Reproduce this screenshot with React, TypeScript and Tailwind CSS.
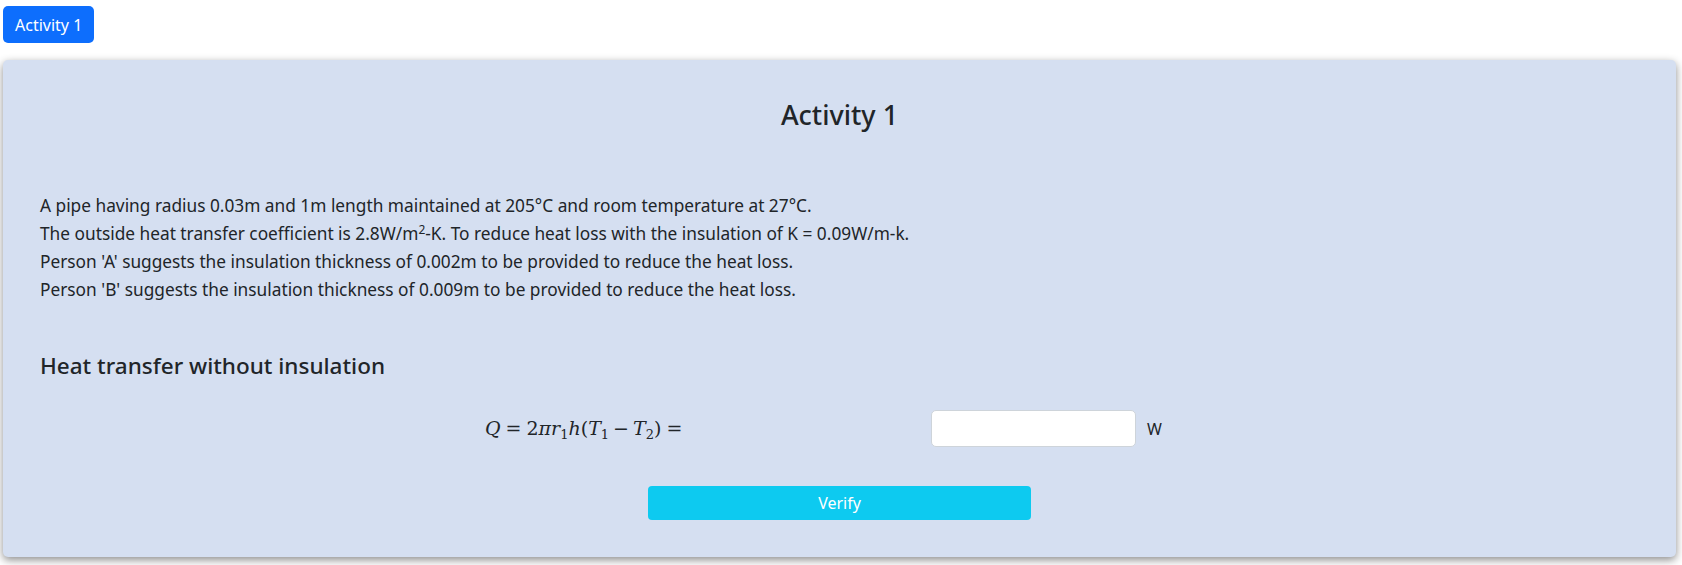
import React, { useState } from 'react';

const App: React.FC = () => {
  const [answer, setAnswer] = useState('');

  return (
    <div className="min-h-screen bg-white text-[#212529]" style={{ fontFamily: '"Noto Sans", "Open Sans", sans-serif' }}>
      <div className="pt-[6px] pl-[3px]">
        <button className="h-[37px] px-[12px] rounded-[5px] bg-[#0d6efd] text-white text-[16px] leading-none">
          Activity 1
        </button>
      </div>

      <div className="mt-[17px] ml-[3px] w-[1673px] h-[497px] rounded-[5px] bg-[#d5dff1] shadow-[0_3px_8px_rgba(0,0,0,0.45)] px-[37px] pt-[39px]">
        <h3 className="text-center text-[27px] font-medium leading-[1.2]">Activity 1</h3>

        <div className="mt-[61px] text-[17.3px] leading-[27.9px]">
          <p>A pipe having radius 0.03m and 1m length maintained at 205°C and room temperature at 27°C.</p>
          <p>
            The outside heat transfer coefficient is 2.8W/m<sup className="text-[12px]">2</sup>-K. To reduce heat loss with the
            insulation of K = 0.09W/m-k.
          </p>
          <p>Person 'A' suggests the insulation thickness of 0.002m to be provided to reduce the heat loss.</p>
          <p>Person 'B' suggests the insulation thickness of 0.009m to be provided to reduce the heat loss.</p>
        </div>

        <h4 className="mt-[48px] text-[22.5px] font-medium leading-[1.2]">Heat transfer without insulation</h4>

        <div className="mt-[31px] flex items-center">
          <div className="w-[891px] pl-[445px] text-[19px] italic whitespace-nowrap" style={{ fontFamily: '"DejaVu Serif", "Liberation Serif", serif' }}>
            <span>Q</span>
            <span className="not-italic mx-[5px]">=</span>
            <span className="not-italic">2</span>
            <span>πr</span>
            <sub className="not-italic text-[13px]">1</sub>
            <span>h</span>
            <span className="not-italic">(</span>
            <span>T</span>
            <sub className="not-italic text-[13px]">1</sub>
            <span className="not-italic mx-[4px]">−</span>
            <span>T</span>
            <sub className="not-italic text-[13px]">2</sub>
            <span className="not-italic">)</span>
            <span className="not-italic mx-[5px]">=</span>
          </div>
          <input
            type="text"
            value={answer}
            onChange={(e) => setAnswer(e.target.value)}
            className="w-[205px] h-[37px] rounded-[5px] bg-white border border-[#ced4da] px-3 outline-none"
          />
          <span className="ml-[11px] text-[16px]">W</span>
        </div>

        <div className="mt-[39px] flex justify-center">
          <button className="w-[383px] h-[34px] rounded-[4px] bg-[#0dcaf0] text-white text-[16px]">Verify</button>
        </div>
      </div>
    </div>
  );
};

export default App;
